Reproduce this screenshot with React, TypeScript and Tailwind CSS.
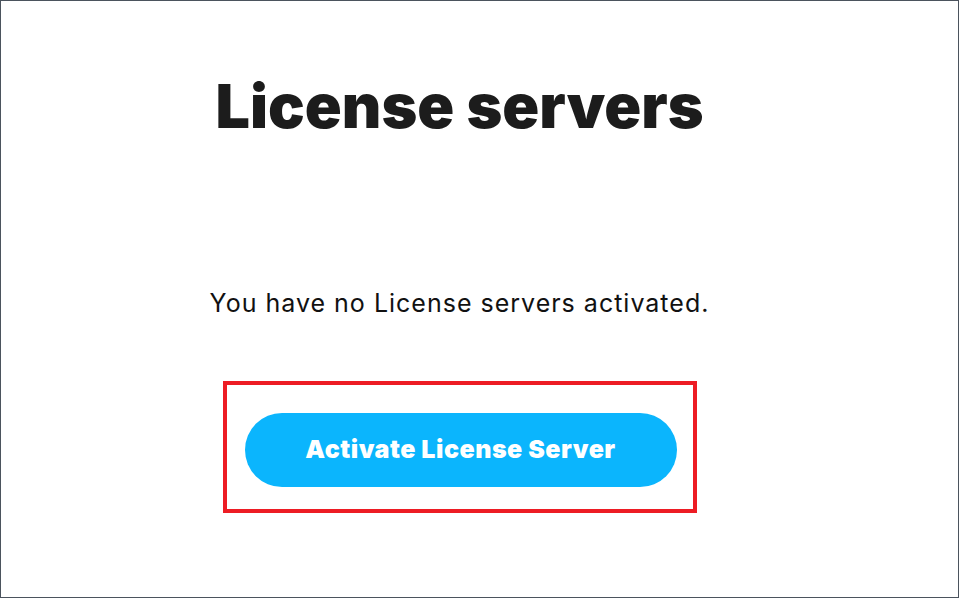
export default function App() {
  return (
    <div
      className="w-[959px] h-[598px] border border-[#4b535d] bg-white overflow-hidden"
      style={{ fontFamily: "Inter, 'Open Sans', sans-serif" }}
    >
      <div className="flex flex-col items-center pr-[40px]">
        <h1 className="mt-[65px] text-[61px] leading-[80px] font-black text-[#1c1c1c] tracking-[0px]">
          License servers
        </h1>
        <p className="mt-[141px] text-[25px] leading-[32px] text-[#111111] tracking-[1px]">
          You have no License servers activated.
        </p>
        <div className="mt-[62px] w-[474px] h-[132px] border-[4px] border-[#ed1c24] pt-[28px] pl-[18px]">
          <button className="w-[432px] h-[74px] rounded-full bg-[#0bb5fd] text-white text-[25px] font-black tracking-[0.5px]">
            Activate License Server
          </button>
        </div>
      </div>
    </div>
  );
}
